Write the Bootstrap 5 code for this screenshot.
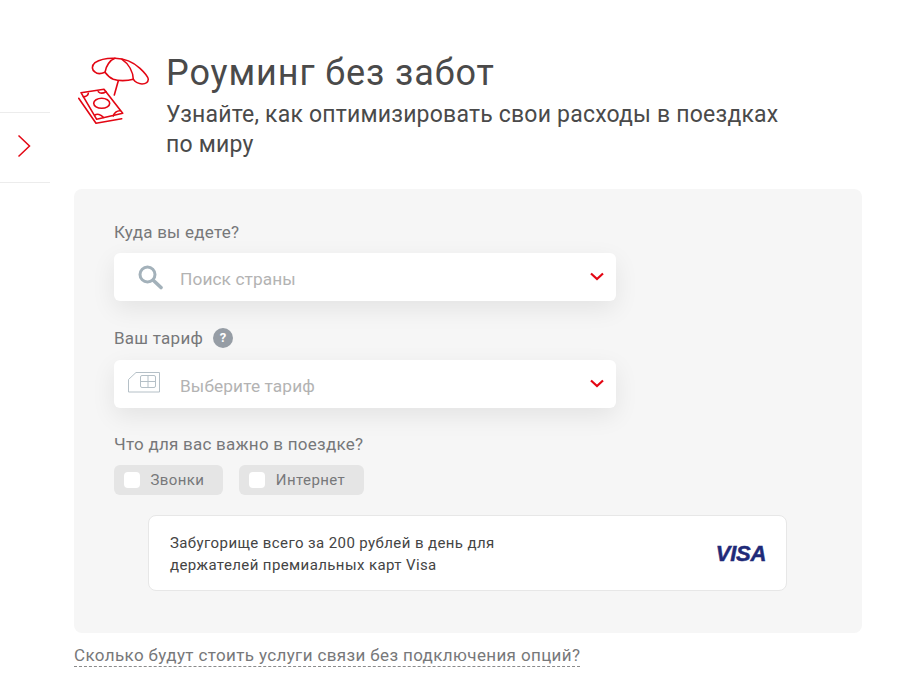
<!DOCTYPE html>
<html lang="ru">
<head>
<meta charset="UTF-8" />
<meta name="viewport" content="width=device-width, initial-scale=1" />
<title>Роуминг без забот</title>
<link href="https://cdn.jsdelivr.net/npm/bootstrap@5.3.0/dist/css/bootstrap.min.css" rel="stylesheet" />
<style>
body { font-family: Roboto, "Liberation Sans", sans-serif; color: #4a4a4a; background: #fff; overflow: hidden; }
.side-rail { width: 50px; padding-top: 112px; }
.side-next { height: 71px; border-top: 1px solid #ececec; border-bottom: 1px solid #ececec; padding-left: 17px; }
.side-next svg { margin-top: -3px; }
.main-col { width: 788px; margin-left: 24px; padding-top: 52px; }
.promo-icon { width: 72px; height: 70px; margin: 4px 16px 0 4px; }
.promo-title { font-size: 36px; line-height: 42px; font-weight: 400; letter-spacing: .9px; margin: 0 0 6px; }
.promo-sub { font-size: 23px; line-height: 30px; margin: 0; letter-spacing: .2px; }
.form-panel { background: #f6f6f6; border-radius: 8px; height: 444px; margin-top: 29px; padding: 32px 40px 0; }
.field-label { font-size: 17px; line-height: 22px; color: #77787a; letter-spacing: .25px; }
.field-first { margin-bottom: 10px; }
.field-second { margin-top: 26px; margin-bottom: 11px; }
.field-third { margin-top: 25px; margin-bottom: 10px; }
.select-box { width: 502px; height: 48px; background: #fff; border-radius: 6px; box-shadow: 0 8px 24px rgba(0, 0, 0, .08); font-size: 17.3px; color: #b3b3b3; }
.select-text { padding-top: 5px; letter-spacing: .1px; }
.select-ico { width: 66px; }
.ico-search { padding-left: 24px; }
.ico-sim { padding-left: 14px; margin-top: -4px; }
.select-arrow { margin-right: 12px; margin-top: -1px; }
.help-dot { width: 20px; height: 20px; border-radius: 50%; background: #969da5; color: #fff; font-size: 13px; font-weight: 700; margin-left: 10px; }
.opt-chip { height: 30px; background: #e5e5e5; border-radius: 6px; font-size: 15px; color: #77787a; padding: 0 19px 0 10px; letter-spacing: .4px; }
.opt-tick { width: 16px; height: 16px; background: #fff; border-radius: 4px; margin-right: 10.5px; }
.offer-box { width: 639px; height: 76px; margin: 20px 0 0 34px; background: #fff; border: 1px solid #e7e7e7; border-radius: 8px; padding: 0 20px 0 21px; font-size: 15px; line-height: 22px; color: #444; letter-spacing: .4px; }
.offer-text { padding-top: 1px; }
.visa-mark { font-family: "Liberation Sans", sans-serif; font-weight: 700; font-style: italic; font-size: 22px; color: #1f2a78; letter-spacing: -.3px; -webkit-text-stroke: .5px #1f2a78; padding-top: 2px; }
.cost-link { display: inline-block; margin-top: 11px; font-size: 17px; line-height: 22px; color: #77787a; text-decoration: none; border-bottom: 1px dashed #8a8a8a; letter-spacing: .37px; }
</style>
</head>
<body>
<div class="d-flex">
	<div class="side-rail flex-shrink-0">
		<div class="side-next d-flex align-items-center">
			<svg width="14" height="24" viewBox="0 0 14 24" fill="none" stroke="#e30613" stroke-width="1.5"><path d="M1.5 1.5 12.5 12 1.5 22.5" /></svg>
		</div>
	</div>
	<div class="main-col flex-shrink-0">
		<div class="d-flex">
			<svg class="promo-icon flex-shrink-0" viewBox="78 56 72 70" fill="none" stroke="#e30613" stroke-width="1.6" stroke-linejoin="round" stroke-linecap="round">
				<path d="M105 72.300C101 74 97 74 95 72 92 70 91 66 95 62.700 99 60 107 58 115 58.300 124 58.500 133 62 140 68.300 144 72 148 76 148.300 79.300 148 83 145 84 142 84 139 84 135 82 133.300 79.300 127 81 118 81 113.300 79.300 110 78 107 75 105 72.300Z" />
				<path d="M105 72.300C106 66 110 60 115 58.300M122 59.300C129 64 133 72 133.300 79.300" />
				<path d="M118.300 80.700 114.300 95" />
				<path d="M81 92.700 104 89.300 122.700 113.300 96.700 119.300Z" />
				<path d="M78.700 98.300 96 123.300 121.700 118.700" />
				<ellipse cx="101.700" cy="103.300" rx="8" ry="5" />
				<path d="M83.300 96.700C86 96.500 88 95 88.300 93.300M98.300 91.700C100 93.500 103 93.500 106 91.700M95 115C97 113.500 101 114.500 103.300 117.300M113.300 116C114 113 117 110.500 120 110.700" />
			</svg>
			<div>
				<h1 class="promo-title">Роуминг без забот</h1>
				<p class="promo-sub">Узнайте, как оптимизировать свои расходы в поездках<br />по миру</p>
			</div>
		</div>
		<div class="form-panel">
			<div class="field-label field-first">Куда вы едете?</div>
			<div class="select-box d-flex align-items-center">
				<div class="select-ico ico-search d-flex flex-shrink-0">
					<svg width="25" height="25" viewBox="0 0 25 25" fill="none" stroke="#a3b1ba" stroke-width="3"><circle cx="9.500" cy="9.500" r="7.500" /><path d="m15.500 15.500 7.500 7" stroke-linecap="round" stroke-width="3.600" /></svg>
				</div>
				<span class="select-text flex-grow-1">Поиск страны</span>
				<svg class="select-arrow" width="14" height="9" viewBox="0 0 14 9" fill="none" stroke="#e30613" stroke-width="2.200"><path d="m1 1.500 6 5.500 6-5.500" /></svg>
			</div>
			<div class="field-label field-second d-flex align-items-center">Ваш тариф<span class="help-dot d-inline-flex align-items-center justify-content-center">?</span></div>
			<div class="select-box d-flex align-items-center">
				<div class="select-ico ico-sim d-flex flex-shrink-0">
					<svg width="32" height="21" viewBox="0 0 32 21" fill="none" stroke="#b5c0c7" stroke-width="1"><path d="M8 .5h23.500v19.500H.5V7.500Z" /><rect x="12.500" y="3.500" width="15" height="12" rx="1.500" /><path d="M12.500 9.500h15M20 3.500v12" /></svg>
				</div>
				<span class="select-text flex-grow-1">Выберите тариф</span>
				<svg class="select-arrow" width="14" height="9" viewBox="0 0 14 9" fill="none" stroke="#e30613" stroke-width="2.200"><path d="m1 1.500 6 5.500 6-5.500" /></svg>
			</div>
			<div class="field-label field-third">Что для вас важно в поездке?</div>
			<div class="d-flex" style="gap:16px">
				<div class="opt-chip d-flex align-items-center"><span class="opt-tick"></span>Звонки</div>
				<div class="opt-chip d-flex align-items-center"><span class="opt-tick"></span>Интернет</div>
			</div>
			<div class="offer-box d-flex align-items-center justify-content-between">
				<div class="offer-text">Забугорище всего за 200 рублей в день для<br />держателей премиальных карт Visa</div>
				<span class="visa-mark">VISA</span>
			</div>
		</div>
		<a href="#" class="cost-link">Сколько будут стоить услуги связи без подключения опций?</a>
	</div>
</div>
<script src="https://cdn.jsdelivr.net/npm/bootstrap@5.3.0/dist/js/bootstrap.bundle.min.js"></script>
</body>
</html>
